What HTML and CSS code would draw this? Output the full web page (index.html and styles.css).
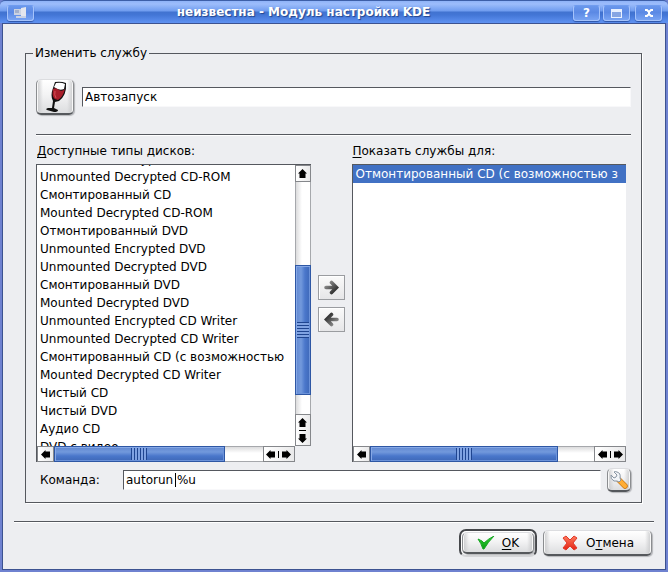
FILE: index.html
```html
<!DOCTYPE html>
<html lang="ru">
<head>
<meta charset="utf-8">
<title>неизвестна - Модуль настройки KDE</title>
<link rel="stylesheet" href="styles.css">
</head>
<body>
<svg class="defs" aria-hidden="true">
  <defs>
    <linearGradient id="steel" x1="0" y1="0" x2="1" y2="1"><stop offset="0" stop-color="#999"/><stop offset="1" stop-color="#222"/></linearGradient>
    <linearGradient id="green" x1="0" y1="0" x2="0" y2="1"><stop offset="0" stop-color="#35d435"/><stop offset="1" stop-color="#079a12"/></linearGradient>
    <linearGradient id="red" x1="0" y1="0" x2="0" y2="1"><stop offset="0" stop-color="#ff7a5c"/><stop offset="1" stop-color="#e32214"/></linearGradient>
    <symbol id="left" viewBox="0 0 9 9"><path d="M0 4.500 4.500 0V1.500H9V7.500H4.500V9Z"/></symbol>
    <symbol id="up" viewBox="0 0 9 9"><path d="M4.500 0 9 4.500H7.500V9H1.500V4.500H0Z"/></symbol>
    <symbol id="arrow" viewBox="0 0 15 15"><path d="M2 7.500H12M7.500 2.500 12.500 7.500 7.500 12.500" fill="none" stroke="url(#steel)" stroke-width="3.600" stroke-linecap="round"/></symbol>
    <symbol id="arrow-body" viewBox="0 0 15 15"><path d="M2 6H9V9H2Z" fill="#777"/></symbol>
  </defs>
</svg>
<div class="window">
  <header class="titlebar">
    <button class="tb-button" aria-label="Меню окна"><svg width="18" height="12" viewBox="0 0 18 12"><path d="M2 2H9V8H2Z" fill="#ccd3e2"/><path d="M3 3H7V6H3Z" fill="#a3b0cc"/><path d="M9 1 14 0V10H9Z" fill="#e4e6ee"/><path d="M4 9H14V11H4Z" fill="#c9d2e6"/></svg></button>
    <h1>неизвестна - Модуль настройки KDE</h1>
    <div class="tb-group">
      <button class="tb-button" aria-label="Справка">?</button>
      <button class="tb-button" aria-label="Развернуть"><svg width="11" height="9" viewBox="0 0 11 9"><path d="M0 0H11V9H0Z" fill="#e8f0ff"/><path d="M1 3H10V8H1Z" fill="#86a5e3"/></svg></button>
      <button class="tb-button tb-close" aria-label="Закрыть"><svg width="10" height="8" viewBox="0 0 10 8"><path d="M1 1H3L5 3 7 1H9M1 7H3L5 5 7 7H9M4 4H6" fill="none" stroke="#fff" stroke-width="2"/></svg></button>
    </div>
  </header>
  <main>
    <fieldset>
      <legend>Изменить службу</legend>
      <div class="service">
        <button class="soft icon-button" aria-label="Значок службы"><svg width="28" height="32" viewBox="0 0 28 32"><path d="M14 1Q20 0 25 2Q26 14 18 20L14 21 13 27 17 29Q17 31 13 31L6 29Q4 28 7 27L11 27 12 20Q9 15 12 7Z" fill="#111"/><path d="M15 2Q20 1 24 3L23 8Q18 10 13 6Z" fill="#fff"/><path d="M12 8Q15 6 18 9 21 11 24 8 22 16 17 19 10 19 12 8Z" fill="#a81f2b"/><path d="M14 10Q13 14 15 17" stroke="#d65258" stroke-width="1" fill="none"/></svg></button>
        <input type="text" aria-label="Название службы" value="Автозапуск">
      </div>
      <div class="rule"></div>
      <div class="lists">
        <section>
          <h2 id="available"><u>Д</u>оступные типы дисков:</h2>
          <div class="listview">
            <ul class="scrolled" role="listbox" aria-labelledby="available">
              <li role="option">Unmounted Encrypted CD-ROM</li>
              <li role="option">Unmounted Decrypted CD-ROM</li>
              <li role="option">Смонтированный CD</li>
              <li role="option">Mounted Decrypted CD-ROM</li>
              <li role="option">Отмонтированный DVD</li>
              <li role="option">Unmounted Encrypted DVD</li>
              <li role="option">Unmounted Decrypted DVD</li>
              <li role="option">Смонтированный DVD</li>
              <li role="option">Mounted Decrypted DVD</li>
              <li role="option">Unmounted Encrypted CD Writer</li>
              <li role="option">Unmounted Decrypted CD Writer</li>
              <li role="option">Смонтированный CD (с возможностью</li>
              <li role="option">Mounted Decrypted CD Writer</li>
              <li role="option">Чистый CD</li>
              <li role="option">Чистый DVD</li>
              <li role="option">Аудио CD</li>
              <li role="option">DVD с видео</li>
            </ul>
            <div class="vbar">
              <button class="step" aria-label="Вверх"><svg width="9" height="9"><use href="#up"/></svg></button>
              <div class="track"><div class="thumb"></div></div>
              <button class="step pair" aria-label="Вверх или вниз"><svg width="9" height="9"><use href="#up"/></svg><i></i><svg class="flip" width="9" height="9"><use href="#up"/></svg></button>
            </div>
            <div class="hbar">
              <button class="step" aria-label="Влево"><svg width="9" height="9"><use href="#left"/></svg></button>
              <div class="track"><div class="thumb"></div></div>
              <button class="step pair" aria-label="Влево или вправо"><svg width="9" height="9"><use href="#left"/></svg><i></i><svg class="flip" width="9" height="9"><use href="#left"/></svg></button>
            </div>
          </div>
        </section>
        <div class="movers">
          <button aria-label="Добавить"><svg width="15" height="15"><use href="#arrow-body"/><use href="#arrow"/></svg></button>
          <button aria-label="Убрать"><svg class="flip" width="15" height="15"><use href="#arrow-body"/><use href="#arrow"/></svg></button>
        </div>
        <section>
          <h2 id="shown"><u>П</u>оказать службы для:</h2>
          <div class="listview single">
            <ul role="listbox" aria-labelledby="shown">
              <li class="selected" role="option" aria-selected="true">Отмонтированный CD (с возможностью з</li>
            </ul>
            <div class="hbar">
              <button class="step" aria-label="Влево"><svg width="9" height="9"><use href="#left"/></svg></button>
              <div class="track"><div class="thumb wide"></div></div>
              <button class="step pair" aria-label="Влево или вправо"><svg width="9" height="9"><use href="#left"/></svg><i></i><svg class="flip" width="9" height="9"><use href="#left"/></svg></button>
            </div>
          </div>
        </section>
      </div>
      <div class="command">
        <label for="command">Команда:</label>
        <div class="field"><input id="command" type="text" value="autorun %u"><span class="caret"></span></div>
        <button class="soft tool-button" aria-label="Настроить"><svg width="18" height="18" viewBox="0 0 18 18"><path d="M9 9 15 15" stroke="#c97816" stroke-width="5.500" stroke-linecap="round"/><path d="M9.500 9.500 15 15" stroke="#ffad35" stroke-width="4" stroke-linecap="round"/><path d="M4 1 7 4 6 6 4 7 1 4Q0 8 4 10L7 10 9 11 11 9 10 7Q11 2 7 1 5 0 4 1Z" fill="#f2f5f8" stroke="#8794a2" stroke-width="1"/></svg></button>
      </div>
    </fieldset>
    <div class="rule"></div>
    <footer>
      <button class="default"><span class="soft"><svg width="18" height="14" viewBox="0 0 18 14"><path d="M1 3 5 5 7 7Q11 3 17 0Q11 6 7 13H6Q4 7 1 3Z" fill="url(#green)" stroke="#18a524" stroke-width="1"/></svg><span><u>O</u>K</span></span></button>
      <button class="soft cancel"><svg width="18" height="16" viewBox="0 0 18 16"><path d="M2 3 5 1 9 5 13 1 16 3 12 8 16 13 13 15 9 11 5 15 2 13 6 8Z" fill="url(#red)" stroke="#e0392a" stroke-width="1"/></svg><span>О<u>т</u>мена</span></button>
    </footer>
  </main>
</div>
</body>
</html>
```

FILE: styles.css
```css
* { box-sizing: border-box; }

body {
  margin: 0;
  background: #6f82d0;
  font: 12px/18px "DejaVu Sans", sans-serif;
  color: #000;
}

button, input { font: inherit; color: inherit; margin: 0; padding: 0; border-radius: 0; }
button { display: flex; align-items: center; justify-content: center; }
svg { display: block; flex: none; }
.flip { transform: rotate(180deg); }
.defs { position: absolute; width: 0; height: 0; }
u { text-decoration: underline; text-underline-offset: 2px; text-decoration-thickness: 1px; }

.window { display: flex; flex-direction: column; min-height: 100vh; padding: 0 2px 2px; }

.titlebar {
  display: flex;
  align-items: center;
  height: 23px;
  margin: 0 -2px;
  padding: 2px 6px 0 7px;
  border-top: 1px solid #3d5fa8;
  border-radius: 5px 5px 0 0;
  background: linear-gradient(#8fb3f8 0, #9dbdfb 3px, #6f9cef 10px, #4173d0 11px, #4376d6 14px, #5f92f2 22px);
}
.titlebar h1 {
  flex: 1;
  margin: 0;
  padding-bottom: 2px;
  text-align: center;
  font-size: 12px;
  line-height: 18px;
  color: #fff;
  text-shadow: 1px 1px 1px #24458c;
}
.tb-group { display: flex; gap: 3px; }
.tb-button {
  width: 27px;
  height: 16px;
  border: 1px solid #a5c3fb;
  border-top-color: #6f9cef;
  border-radius: 3px;
  background: linear-gradient(#6a97ec, #5b89e4 45%, #78a3f3);
  box-shadow: 0 1px 1px #2c54a8;
  color: #fff;
  font-weight: bold;
}
.tb-close { margin-left: 2px; }

main {
  flex: 1;
  display: flex;
  flex-direction: column;
  padding: 20px 11px 12px 11px;
  border: 1px solid #3c5290;
  background: #edeef1;
}

fieldset {
  flex: 1;
  display: flex;
  flex-direction: column;
  min-width: 0;
  margin: 0 12px 18px 11px;
  padding: 17px 10px 8px 10px;
  border: 1px solid #55585e;
  box-shadow: 1px 1px 0 #fff;
}
legend { margin-left: -3px; padding: 0 2px; }

.rule { height: 2px; flex: none; border-top: 1px solid #55585e; border-bottom: 1px solid #fff; }

.soft {
  border: 1px solid #8b8d90;
  border-top-color: #dcdde0;
  border-bottom: 2px solid #55585c;
  border-radius: 5px;
  background: linear-gradient(90deg, #c9cacc 0, rgba(240, 240, 241, 0) 6px, rgba(240, 240, 241, 0) calc(100% - 6px), #c9cacc 100%), linear-gradient(#fff, #f3f3f4 45%, #dcdddf);
  box-shadow: 1px 1px 1px #b5b6ba, inset 1px 0 0 #f8f8f8, inset -1px 0 0 #f8f8f8;
}

input {
  width: 100%;
  height: 20px;
  padding: 0 0 0 2px;
  border: 1px solid #f8f8fa;
  border-top-color: #55585e;
  border-left-color: #55585e;
  background: #fff;
  outline: 0;
}

.service { display: flex; align-items: center; gap: 8px; margin-bottom: 19px; }
.icon-button { flex: none; width: 38px; height: 36px; }

.lists { flex: 1; display: flex; padding-top: 6px; }
.lists section { flex: 1; min-width: 0; display: flex; flex-direction: column; }
.lists section:last-child { margin-right: 5px; }
h2 { margin: 0 0 4px; padding-left: 1px; font: inherit; }

.listview {
  flex: 1;
  display: grid;
  grid-template-columns: minmax(0, 1fr) 16px;
  grid-template-rows: minmax(0, 1fr) 16px;
  min-height: 298px;
  border-top: 1px solid #55585e;
  border-left: 1px solid #55585e;
}
.listview.single { grid-template-columns: minmax(0, 1fr); }
ul { margin: 0; padding: 0; height: 281px; overflow: hidden; background: #fff; list-style: none; }
.single ul { height: auto; }
li { padding: 0 3px; height: 18px; white-space: nowrap; overflow: hidden; }
.scrolled li:first-child { margin-top: -15px; }
.selected { background: #4171c4; color: #fff; }

.vbar, .hbar { display: flex; min-width: 0; min-height: 0; }
.vbar { flex-direction: column; }
.step {
  flex: none;
  gap: 3px;
  width: 16px;
  height: 17px;
  border: 1px solid #85878b;
  background: linear-gradient(90deg, #fff, #e9e9ea);
}
.hbar .step { width: 17px; height: 16px; }
.vbar .pair { flex-direction: column; height: 32px; }
.hbar .pair { width: 32px; }
.pair i { width: 7px; height: 1px; background: #000; }
.hbar .pair i { width: 1px; height: 7px; }
.track {
  flex: 1;
  display: flex;
  min-width: 0;
  border: 1px solid #a6a8ac;
  border-width: 0 1px;
  background: linear-gradient(90deg, #dcdcdd, #fff 6px);
}
.hbar .track { border-width: 1px 0; background: linear-gradient(#dcdcdd, #fff 6px); }
.thumb {
  flex: none;
  border: 1px solid #2e57a4;
  box-shadow: inset 1px 1px 0 #86a8e6, inset -1px -1px 0 #6b92d9;
}
.vbar .thumb {
  width: 16px;
  height: 56%;
  margin: 83px -1px 0;
  background: repeating-linear-gradient(#1f4590 0 1px, #7fa2e2 1px 3px) center / 100% 16px no-repeat, linear-gradient(90deg, #6288d0, #7299dc 5px, #4a77cb 9px, #3e68b8);
}
.hbar .thumb {
  width: 82%;
  height: 16px;
  margin: -1px 0;
  background: repeating-linear-gradient(90deg, #1f4590 0 1px, #7fa2e2 1px 3px) center / 16px 100% no-repeat, linear-gradient(#6288d0, #7299dc 5px, #4a77cb 9px, #3e68b8);
}
.hbar .wide { width: 84%; }

.movers { flex: none; display: flex; flex-direction: column; gap: 7px; width: 41px; padding: 133px 7px 0 7px; }
.movers button { height: 25px; border: 1px solid #9a9ca0; background: linear-gradient(#fafafa, #e6e6e8); box-shadow: inset 1px 1px 0 #fff; }

.command { display: flex; align-items: center; margin-top: 6px; padding-left: 4px; }
.command label { width: 83px; }
.field { position: relative; flex: 1; }
.caret { position: absolute; left: 52px; top: 3px; width: 1px; height: 14px; background: #000; }
.tool-button { flex: none; width: 24px; height: 24px; margin-left: 6px; }

footer { display: flex; justify-content: flex-end; align-items: center; gap: 6px; padding: 6px 2px 0 0; }
.default {
  width: 78px;
  height: 28px;
  padding: 1px;
  border: 2px solid #45474b;
  border-bottom-color: #d5d6d9;
  border-radius: 7px;
  background: #fff;
}
.default .soft { display: flex; align-items: center; justify-content: center; gap: 7px; width: 100%; height: 100%; }
.cancel { gap: 7px; width: 109px; height: 26px; }
```
